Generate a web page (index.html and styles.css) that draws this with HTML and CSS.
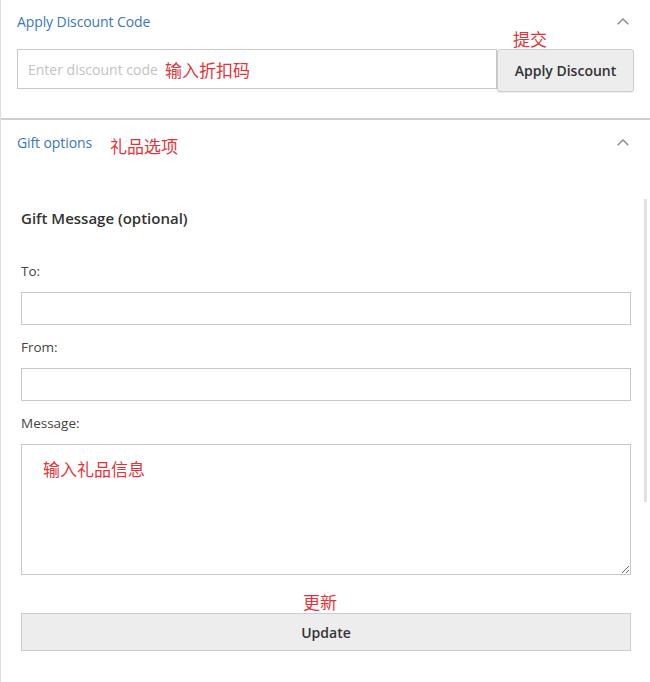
FILE: index.html
```html
<!DOCTYPE html>
<html lang="zh-CN">
<head>
<meta charset="utf-8">
<title>Discount and Gift options</title>
<link rel="stylesheet" href="styles.css">
</head>
<body>
<div class="panel">
  <section class="block discount">
    <div class="block-head">
      <span class="block-title">Apply Discount Code</span>
      <svg class="chev" width="12" height="7" viewBox="0 0 12 7"><polyline points="0.7,6.3 6,1 11.3,6.3" fill="none" stroke="#8a8a8a" stroke-width="1.4"/></svg>
    </div>
    <div class="discount-row">
      <div class="field">
        <input class="text-input discount-input" type="text" placeholder="Enter discount code">
        <span class="note note-code">输入折扣码</span>
      </div>
      <div class="action">
        <span class="note note-submit">提交</span>
        <button class="btn btn-apply" type="button">Apply Discount</button>
      </div>
    </div>
  </section>

  <section class="block gift">
    <div class="block-head">
      <span class="head-left"><span class="block-title">Gift options</span><span class="note note-gift">礼品选项</span></span>
      <svg class="chev" width="12" height="7" viewBox="0 0 12 7"><polyline points="0.7,6.3 6,1 11.3,6.3" fill="none" stroke="#8a8a8a" stroke-width="1.4"/></svg>
    </div>
    <div class="gift-body">
      <h3 class="gift-heading">Gift Message (optional)</h3>
      <label class="field-label">To:</label>
      <input class="text-input gift-input" type="text">
      <label class="field-label">From:</label>
      <input class="text-input gift-input" type="text">
      <label class="field-label">Message:</label>
      <div class="message-wrap">
        <textarea class="message"></textarea>
        <span class="note note-message">输入礼品信息</span>
      </div>
      <div class="update-wrap">
        <span class="note note-update">更新</span>
        <button class="btn btn-update" type="button">Update</button>
      </div>
    </div>
    <div class="scroll-thumb"></div>
  </section>
</div>
</body>
</html>
```

FILE: styles.css
```css
html, body {
  margin: 0;
  padding: 0;
  background: #ffffff;
}

body {
  font-family: "Open Sans", "Noto Sans", sans-serif;
  color: #333333;
  width: 650px;
  height: 682px;
  overflow: hidden;
}

.panel {
  border-left: 1px solid #dcdcdc;
  height: 682px;
  box-sizing: border-box;
}

.block {
  position: relative;
}

.discount {
  height: 120px;
  box-sizing: border-box;
  padding: 0 16px 0 16px;
  border-bottom: 2px solid #cfcfcf;
}

.block-head {
  display: flex;
  justify-content: space-between;
  align-items: center;
}

.discount .block-head {
  height: 42px;
}

.gift .block-head {
  height: 44px;
  padding: 0 16px 0 16px;
}

.block-title {
  font-size: 14px;
  color: #3a78b6;
  letter-spacing: -0.1px;
}

.chev {
  display: block;
  margin-right: 5px;
}

.head-left {
  display: flex;
  align-items: center;
}

.note {
  font-family: "Noto Sans CJK SC", "Noto Sans", sans-serif;
  color: #e0353c;
  font-size: 17px;
  line-height: 18px;
  white-space: nowrap;
}

.note-gift {
  margin-left: 18px;
  margin-top: 8px;
}

.discount-row {
  display: flex;
  align-items: flex-start;
  margin-top: 7px;
}

.field {
  position: relative;
  flex: 1;
}

.text-input {
  display: block;
  box-sizing: border-box;
  width: 100%;
  border: 1px solid #c8c8c8;
  background: #ffffff;
  font-family: "Open Sans", sans-serif;
  font-size: 14px;
  color: #333;
  outline: none;
  margin: 0;
  border-radius: 0;
}

.discount-input {
  height: 40px;
  padding: 0 10px;
  font-size: 14px;
}

.discount-input::placeholder {
  color: #c3c3c3;
}

.note-code {
  position: absolute;
  left: 148px;
  top: 12px;
}

.action {
  position: relative;
  width: 137px;
}

.note-submit {
  position: absolute;
  left: 16px;
  top: -19px;
}

.btn {
  display: block;
  box-sizing: border-box;
  background: #ededed;
  border: 1px solid #cdcdcd;
  color: #333333;
  font-family: "Open Sans", sans-serif;
  font-weight: 600;
  font-size: 14px;
  margin: 0;
  cursor: pointer;
}

.btn-apply {
  width: 137px;
  height: 43px;
  border-radius: 3px;
  box-shadow: 0 1px 1px rgba(0, 0, 0, 0.08);
  padding: 0;
}

.gift-body {
  padding: 0 19px 0 20px;
}

.gift-heading {
  margin: 44px 0 33px 0;
  font-size: 15px;
  font-weight: 600;
  line-height: 20px;
  color: #333333;
}

.field-label {
  display: block;
  font-size: 13.5px;
  line-height: 20px;
  color: #444444;
  margin-bottom: 11px;
}

.gift-input {
  height: 33px;
  margin-bottom: 12px;
}

.message-wrap {
  position: relative;
}

.message {
  display: block;
  box-sizing: border-box;
  width: 100%;
  height: 131px;
  border: 1px solid #c8c8c8;
  margin: 0;
  padding: 8px 10px;
  font-family: "Open Sans", sans-serif;
  font-size: 14px;
  outline: none;
}

.note-message {
  position: absolute;
  left: 22px;
  top: 16px;
}

.update-wrap {
  position: relative;
  margin-top: 38px;
}

.note-update {
  position: absolute;
  left: 282px;
  top: -20px;
}

.btn-update {
  width: 100%;
  height: 38px;
  border-radius: 0;
  padding: 0;
}

.scroll-thumb {
  position: absolute;
  left: 643px;
  top: 79px;
  width: 3px;
  height: 303px;
  background: #e2e2e2;
}
```
